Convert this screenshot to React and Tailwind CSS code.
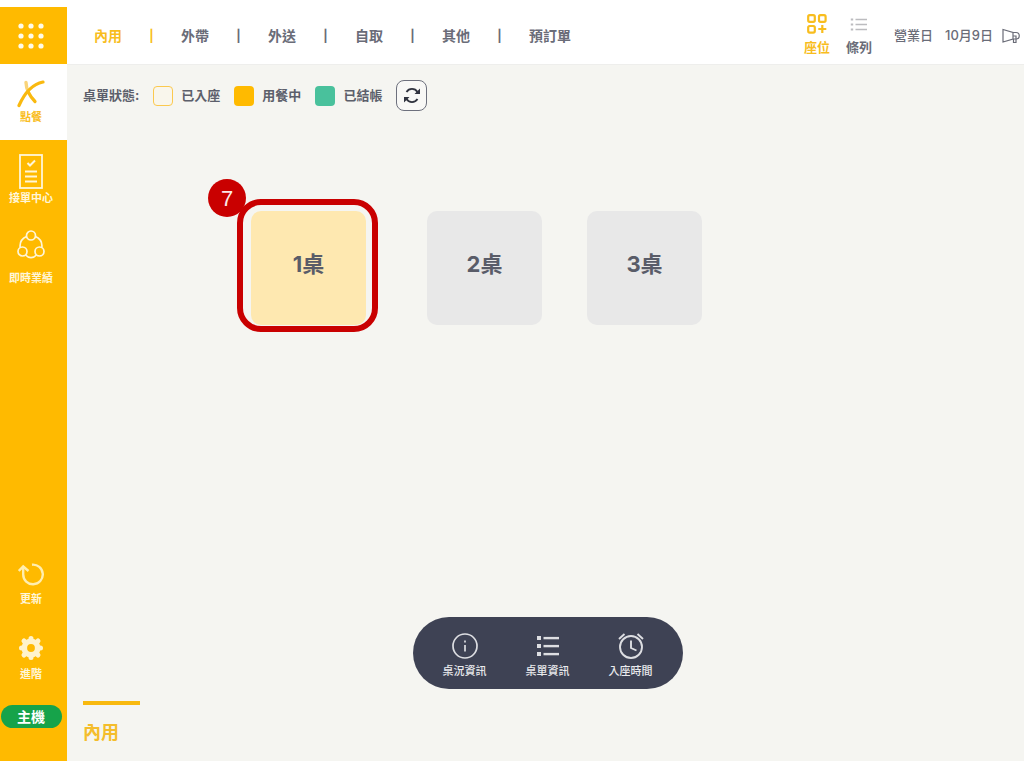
import React from 'react';
import clsx from 'clsx';

const orderTypes = ['內用', '外帶', '外送', '自取', '其他', '預訂單'];

const statuses = [
  { label: '已入座', color: 'border border-[#fbc94f] bg-[#f9f6ec]' },
  { label: '用餐中', color: 'bg-[#ffba00]' },
  { label: '已結帳', color: 'bg-[#49c19c]' },
];

const GridDots = () => (
  <svg width="26" height="26" viewBox="0 0 26 26" fill="#fffbe8">
    {[3, 13, 23].map((y) => [3, 13, 23].map((x) => <circle key={`${x}-${y}`} cx={x} cy={y} r="2.6" />))}
  </svg>
);

const OrderLogo = () => (
  <svg width="28" height="28" viewBox="0 0 28 28" fill="none" strokeLinecap="round">
    <path d="M9 2.500c.2 4 .8 7 2.500 10" stroke="#f9d47a" strokeWidth="3.400" />
    <path d="M11.500 12.500c1.500 3 3.500 6 6.500 9" stroke="#f9b90f" strokeWidth="3.200" />
    <path d="M2 25.500C6 16.500 13.500 4.500 26 2" stroke="#f9b90f" strokeWidth="3.200" />
  </svg>
);

const ChecklistIcon = () => (
  <svg width="24" height="35" viewBox="0 0 24 35" fill="none" stroke="#fff6d8" strokeWidth="1.8">
    <rect x="1" y="1" width="22" height="33" />
    <path d="m8.500 9 2.500 2.500 5-5" strokeWidth="2" />
    <path d="M6 17.500h12M6 22.500h12M6 27.500h12" />
  </svg>
);

const PerformanceIcon = () => (
  <svg width="28" height="29" viewBox="0 0 28 29" fill="none" stroke="#fff6d8" strokeWidth="1.700">
    <circle cx="14" cy="5.500" r="4.500" />
    <circle cx="5.500" cy="21.500" r="4.500" />
    <circle cx="22.500" cy="21.500" r="4.500" />
    <path d="M9.500 6.500C5 8.500 2.500 12.500 3.200 17.600M18.500 6.500c4.500 2 7 6 6.300 11.100M8.600 25c3 3.500 7.800 3.500 10.800 0" />
  </svg>
);

const UpdateIcon = () => (
  <svg width="26" height="24" viewBox="0 0 26 24" fill="none" stroke="#ffeeb0" strokeWidth="2.400">
    <path d="M14 1.700a9.800 9.800 0 1 1-8.800 9.800V4" />
    <path d="M.8 8 5.200 3.500 10.500 8" />
  </svg>
);

const GearIcon = () => (
  <svg width="26" height="26" viewBox="0 0 26 26" fill="none" stroke="#fff3cc">
    <circle cx="13" cy="13" r="6.700" strokeWidth="5.600" />
    <path
      d="M13 3.500v2M13 20.500v2M3.500 13h2M20.500 13h2M6 6l1.500 1.500M18.500 18.500 20 20M6 20l1.500-1.500M18.500 7.500 20 6"
      strokeWidth="5"
      strokeLinecap="round"
    />
  </svg>
);

const SeatIcon = () => (
  <svg width="20" height="20" viewBox="0 0 20 20" fill="none" stroke="#f8bd1e" strokeWidth="2.200">
    <rect x="1.200" y="1.200" width="6.600" height="6.600" rx="1.500" />
    <rect x="12" y="1.200" width="6.600" height="6.600" rx="1.500" />
    <rect x="1.200" y="12" width="6.600" height="6.600" rx="1.500" />
    <path d="M15.300 11v8M11.300 15h8" />
  </svg>
);

const RowsIcon = () => (
  <svg width="18" height="20" viewBox="0 0 18 20" fill="none" stroke="#bcbcbf" strokeWidth="1.300">
    <path d="M5.500 5.500H17M5.500 10.500H17M5.500 15.500H17" />
    <path d="M.8 5.500h2.400M.8 10.500h2.400M.8 15.500h2.400" strokeWidth="2.200" />
  </svg>
);

const MegaphoneIcon = () => (
  <svg width="18" height="16" viewBox="0 0 18 16" fill="none" stroke="#6a6c77" strokeWidth="1.200">
    <path d="M1 1.500v12.500l10-3V4.500L1 1.500Z" />
    <path d="M11 4.500h3a3.200 3.200 0 0 1 0 6.500h-3" />
    <path d="M11 8h3v6.500h-2.500V11" />
  </svg>
);

const RefreshIcon = () => (
  <svg width="18" height="17" viewBox="0 0 18 17" fill="none" stroke="#30333f" strokeWidth="1.800">
    <path d="M3.500 5A6.500 6.500 0 0 1 14.500 5M14.500 12A6.500 6.500 0 0 1 3.500 12" />
    <path d="M17 1.500v5.500h-5.500zM1 15.500V10h5.500z" fill="#30333f" stroke="none" />
  </svg>
);

const InfoIcon = () => (
  <svg width="26" height="26" viewBox="0 0 26 26" fill="none" stroke="#dddee2" strokeWidth="1.700">
    <circle cx="13" cy="13" r="12" />
    <path d="M13 12v6.500M13 7.500v2" />
  </svg>
);

const ListIcon = () => (
  <svg width="24" height="26" viewBox="0 0 24 26" fill="#dddee2">
    {[3, 11, 19].map((y) => (
      <g key={y}>
        <rect x="1" y={y} width="4" height="4" />
        <rect x="7.500" y={y + 0.9} width="15.500" height="2.400" />
      </g>
    ))}
  </svg>
);

const AlarmIcon = () => (
  <svg width="26" height="26" viewBox="0 0 26 26" fill="none" stroke="#dddee2" strokeWidth="1.900">
    <circle cx="13" cy="14" r="11" />
    <path d="M13 7.500V15l5.500 2.500M1 6l5.500-5M25 6l-5.500-5" />
  </svg>
);

const actions = [
  { label: '桌況資訊', Icon: InfoIcon },
  { label: '桌單資訊', Icon: ListIcon },
  { label: '入座時間', Icon: AlarmIcon },
];

const Sidebar = () => (
  <aside className="flex w-[67px] shrink-0 flex-col bg-[#ffba00] text-[11px] leading-4 font-bold text-[#fff6d8]">
    <button aria-label="選單" className="flex h-[57px] items-center justify-center pr-[5px]">
      <GridDots />
    </button>
    <button className="flex h-[76px] flex-col items-center gap-px bg-white pt-4 pr-[5px] text-[#f9bd1f]">
      <OrderLogo />
      點餐
    </button>
    <button className="flex flex-col items-center gap-px pt-[14px] pr-[5px]">
      <ChecklistIcon />
      接單中心
    </button>
    <button className="flex flex-col items-center gap-[11px] pt-6 pr-[5px]">
      <PerformanceIcon />
      即時業績
    </button>

    <div className="mt-auto flex flex-col items-center pt-8 pr-[5px] pb-[33px]">
      <button className="flex flex-col items-center gap-1">
        <UpdateIcon />
        更新
      </button>
      <button className="flex flex-col items-center gap-[5px] pt-7">
        <GearIcon />
        進階
      </button>
      <button className="mt-[23px] h-[23px] w-[61px] rounded-full bg-[#16a34a] text-sm leading-5 text-white">
        主機
      </button>
    </div>
  </aside>
);

const Header = () => (
  <header className="flex h-[57px] items-center justify-between bg-white pr-1 pl-[27px] text-[#6a6c78]">
    <nav className="flex items-center gap-7 text-sm font-bold">
      {orderTypes.map((type, i) => (
        <React.Fragment key={type}>
          {i > 0 && (
            <span className={clsx('flex w-[3px] justify-center text-xs', i === 1 && 'text-[#f8bd1e]')}>|</span>
          )}
          <button className={clsx('whitespace-nowrap', i === 0 && 'text-[#f8bd1e]')}>{type}</button>
        </React.Fragment>
      ))}
    </nav>

    <div className="flex shrink-0 items-center text-[13px] font-medium">
      <button className="flex flex-col items-center gap-[3px] leading-5 font-bold text-[#f8bd1e]">
        <SeatIcon />
        座位
      </button>
      <button className="ml-4 flex flex-col items-center gap-[3px] leading-5 font-bold">
        <RowsIcon />
        條列
      </button>
      <span className="ml-[22px]">營業日</span>
      <span className="ml-3">10月9日</span>
      <button aria-label="公告" className="ml-[9px]">
        <MegaphoneIcon />
      </button>
    </div>
  </header>
);

const StatusBar = () => (
  <div className="flex items-center gap-[14px] pl-4 text-[13px] font-bold text-[#5c5f6b]">
    <span>桌單狀態:</span>
    {statuses.map(({ label, color }) => (
      <div key={label} className="flex items-center gap-2">
        <span className={clsx('size-5 rounded', color)} />
        <span>{label}</span>
      </div>
    ))}
    <button
      aria-label="重新整理"
      className="flex size-[31px] items-center justify-center rounded-lg border border-[#6d707d] bg-[#f8f8f6]"
    >
      <RefreshIcon />
    </button>
  </div>
);

const Table = ({ name, selected, step }) => (
  <div className={clsx('relative', selected && 'mr-4')}>
    <button
      className={clsx(
        'h-[114px] w-[115px] rounded-[10px] pb-2 text-[22px] font-bold text-[#595c68]',
        selected ? 'bg-[#fee8b0]' : 'bg-[#e8e8e8]'
      )}
    >
      {name}
    </button>
    {/* Step marker over the selected table */}
    {selected && (
      <div className="pointer-events-none absolute -top-3 -right-3 -bottom-[7px] -left-[14px] rounded-3xl border-6 border-[#c90000]">
        <span className="absolute -top-[26px] -left-[35px] flex size-[38px] items-center justify-center rounded-full bg-[#c90000] font-[Liberation_Sans,sans-serif] text-[22px] text-[#fbe9e9]">
          {step}
        </span>
      </div>
    )}
  </div>
);

const App = () => {
  return (
    <div className="flex min-h-screen bg-white py-[7px] font-[Inter,'Noto_Sans_CJK_TC',sans-serif]">
      <Sidebar />
      <div className="flex min-w-0 flex-1 flex-col">
        <Header />
        <main className="flex flex-1 flex-col border-t border-[#eeeeec] bg-[#f5f5f1] pt-[15px]">
          <StatusBar />

          <div className="mt-[100px] flex flex-wrap gap-[45px] pl-[184px]">
            <Table name="1桌" selected step={7} />
            <Table name="2桌" />
            <Table name="3桌" />
          </div>

          <div className="mt-auto flex justify-center pt-8 pl-1">
            <div className="flex h-[72px] w-[270px] items-center justify-center gap-[39px] rounded-full bg-[#3e4254] pt-[6px] text-[11px] leading-4 font-medium text-[#e9eaed]">
              {actions.map(({ label, Icon }) => (
                <button key={label} className="flex flex-col items-center gap-1 whitespace-nowrap">
                  <Icon />
                  {label}
                </button>
              ))}
            </div>
          </div>

          <div className="mt-3 flex pb-4 pl-4">
            <button className="w-[57px] border-t-4 border-[#f8b90f] pt-4 text-left text-lg leading-6 font-bold text-[#f4bd2c]">
              內用
            </button>
          </div>
        </main>
      </div>
    </div>
  );
};

export default App;
